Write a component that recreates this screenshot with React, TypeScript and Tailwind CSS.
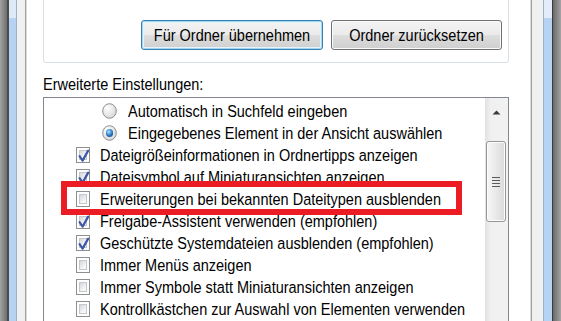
import React from "react";

const font = { fontFamily: '"Liberation Sans", Arial, sans-serif' };

function T({ children }: { children: React.ReactNode }) {
  return (
    <span className="inline-block origin-center scale-y-[1.14] whitespace-nowrap text-[14.5px] leading-[22px] text-black">
      {children}
    </span>
  );
}

function CheckBox({ checked }: { checked: boolean }) {
  return (
    <div className="relative h-[16px] w-[14px] shrink-0 border border-[#8e8f8f] bg-white p-[2px]">
      <div className="h-full w-full border border-[#c4c7cc] bg-[linear-gradient(135deg,#d4d6d9,#f4f5f6_70%,#fbfbfb)]" />
      {checked && (
        <svg className="absolute left-0 top-0" width="14" height="16" viewBox="0 0 14 16">
          <path d="M2.6 8.2 L5.6 12.6 L11.2 2.6" fill="none" stroke="#3f57a6" strokeWidth="2.2" strokeLinejoin="round" strokeLinecap="round" />
        </svg>
      )}
    </div>
  );
}

function Radio({ checked }: { checked: boolean }) {
  return (
    <svg width="15" height="16" viewBox="0 0 15 16" className="shrink-0">
      <defs>
        <radialGradient id="rg" cx="35%" cy="30%" r="80%">
          <stop offset="0%" stopColor="#ffffff" />
          <stop offset="100%" stopColor="#d2d4d6" />
        </radialGradient>
        <radialGradient id="dot" cx="40%" cy="35%" r="70%">
          <stop offset="0%" stopColor="#b8e3fb" />
          <stop offset="55%" stopColor="#3a8ad3" />
          <stop offset="100%" stopColor="#1b4f8a" />
        </radialGradient>
      </defs>
      <ellipse cx="7.5" cy="8" rx="6.8" ry="7.3" fill="url(#rg)" stroke="#8e8f8f" strokeWidth="1" />
      {checked && <ellipse cx="7.5" cy="8" rx="3.6" ry="3.9" fill="url(#dot)" />}
    </svg>
  );
}

function CheckRow({ checked, label }: { checked: boolean; label: string }) {
  return (
    <div className="flex h-[22px] items-center gap-[10px] pl-[32px]">
      <CheckBox checked={checked} />
      <T>{label}</T>
    </div>
  );
}

function RadioRow({ checked, label }: { checked: boolean; label: string }) {
  return (
    <div className="flex h-[22px] items-center gap-[11px] pl-[58px]">
      <Radio checked={checked} />
      <T>{label}</T>
    </div>
  );
}

function WinButton({ label, width, isDefault }: { label: string; width: string; isDefault?: boolean }) {
  return (
    <div
      className={
        "flex h-[30px] items-center justify-center rounded-[3px] border bg-[linear-gradient(#f3f3f3,#ebebeb_48%,#dddddd_52%,#cfcfcf)] " +
        width +
        (isDefault
          ? " border-[#3c7fb1] shadow-[inset_0_0_0_1px_#9fd8f5,inset_0_0_0_2px_#e6f4fb]"
          : " border-[#707070] shadow-[inset_0_0_0_1px_#fbfbfb]")
      }
    >
      <T>{label}</T>
    </div>
  );
}

export default function App() {
  return (
    <div className="relative flex h-[321px] w-[561px] overflow-hidden bg-white" style={font}>
      {/* left window frame */}
      <div className="w-[7px] bg-[linear-gradient(to_right,#a3a3a3,#6e6e6e)]" />
      <div className="w-[2px] bg-[#4b4b4b]" />
      <div className="flex w-[7px] flex-col">
        <div className="h-[18px] bg-[#dfeaf7]" />
        <div className="flex-1 bg-[#b6d3f3]" />
      </div>
      <div className="w-px bg-[#9fb1c6]" />
      <div className="w-[8px] bg-[#f0f0f0]" />
      <div className="w-px bg-[#a0a0a0]" />
      <div className="w-px bg-[#dcdcdc]" />

      {/* main content */}
      <div className="flex w-[503px] flex-col bg-white pl-[16px] pr-[21px]">
        <div className="-mt-[10px] flex h-[73px] shrink-0 items-end justify-end gap-[8px] rounded-[3px] border border-[#d5dfe5] pb-[12px] pr-[6px]">
          <WinButton label="Für Ordner übernehmen" width="w-[182px]" isDefault />
          <WinButton label="Ordner zurücksetzen" width="w-[171px]" />
        </div>
        <div className="mt-[9px] h-[22px] shrink-0">
          <T>Erweiterte Einstellungen:</T>
        </div>
        <div className="mt-[3px] flex h-[250px] shrink-0 border border-[#828790]">
          <div className="flex flex-1 flex-col pt-[2px]">
            <RadioRow checked={false} label="Automatisch in Suchfeld eingeben" />
            <RadioRow checked={true} label="Eingegebenes Element in der Ansicht auswählen" />
            <CheckRow checked={true} label="Dateigrößeinformationen in Ordnertipps anzeigen" />
            <CheckRow checked={true} label="Dateisymbol auf Miniaturansichten anzeigen" />
            <CheckRow checked={false} label="Erweiterungen bei bekannten Dateitypen ausblenden" />
            <CheckRow checked={true} label="Freigabe-Assistent verwenden (empfohlen)" />
            <CheckRow checked={true} label="Geschützte Systemdateien ausblenden (empfohlen)" />
            <CheckRow checked={false} label="Immer Menüs anzeigen" />
            <CheckRow checked={false} label="Immer Symbole statt Miniaturansichten anzeigen" />
            <CheckRow checked={false} label="Kontrollkästchen zur Auswahl von Elementen verwenden" />
          </div>
          {/* scrollbar */}
          <div className="flex w-[23px] flex-col bg-[linear-gradient(to_right,#e2e2e2,#f0f0f0_25%,#f2f2f2)]">
            <div className="flex h-[28px] items-center justify-center">
              <svg width="9" height="5" viewBox="0 0 9 5">
                <path d="M0.5 4.5 L4.5 0.5 L8.5 4.5 Z" fill="#3a3a3a" />
              </svg>
            </div>
            <div className="ml-[1px] mt-[15px] flex h-[81px] w-[20px] flex-col items-center justify-center gap-[2px] rounded-[3px] border border-[#979797] bg-[linear-gradient(to_right,#f6f6f6,#e9e9e9_50%,#d9d9d9)] shadow-[inset_0_0_0_1px_#fcfcfc]">
              <div className="h-px w-[8px] bg-[#5a5a5a]" />
              <div className="h-px w-[8px] bg-[#5a5a5a]" />
              <div className="h-px w-[8px] bg-[#5a5a5a]" />
              <div className="h-px w-[8px] bg-[#5a5a5a]" />
            </div>
          </div>
        </div>
      </div>

      {/* right window frame */}
      <div className="w-px bg-[#dcdcdc]" />
      <div className="w-px bg-[#a0a0a0]" />
      <div className="w-[11px] bg-[#f0f0f0]" />
      <div className="w-px bg-[#9fb1c6]" />
      <div className="flex w-[8px] flex-col">
        <div className="h-[18px] bg-[#e3edf9]" />
        <div className="flex-1 bg-[#b6d3f3]" />
      </div>
      <div className="w-px bg-[#3a3a3a]" />
      <div className="w-[8px] bg-[linear-gradient(to_right,#6a6a6a,#a3a3a3)]" />

      {/* red annotation box */}
      <div className="absolute left-[61px] top-[181px] h-[34px] w-[401px] border-[6px] border-[#ec1c24]" />
    </div>
  );
}
